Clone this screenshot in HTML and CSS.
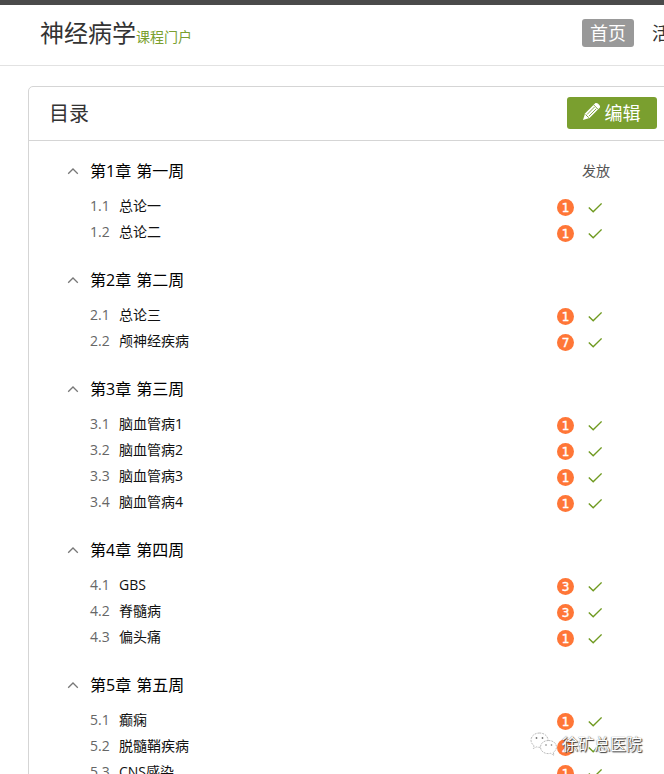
FILE: index.html
```html
<!DOCTYPE html>
<html lang="zh-CN">
<head>
    <meta charset="UTF-8">
    <title>神经病学课程门户</title>
    <link rel="stylesheet" href="styles.css">
</head>
<body>
    <svg class="symbols" width="0" height="0">
        <symbol id="arrow" viewBox="0 0 12 8"><path d="M1.2 6.8L6 2l4.800 4.800" fill="none" stroke="#777" stroke-width="1.3"/></symbol>
        <symbol id="check" viewBox="0 0 14 11"><path d="M.8 5.4L5.200 9.800 13.600 1.400" fill="none" stroke="#6f9a20" stroke-width="1.4"/></symbol>
    </svg>

    <header class="header">
        <h1 class="title">神经病学<small>课程门户</small></h1>
        <nav class="nav">
            <a class="active">首页</a>
            <a>活动</a>
        </nav>
    </header>

    <main class="panel">
        <div class="panel-header">
            <h2>目录</h2>
            <button class="edit-btn">
                <svg width="20" height="20" viewBox="0 0 20 20">
                    <path d="M1 19l2-6.500L13.2 2.3c1.800-1.800 6.300 2.700 4.500 4.500L7.500 17z" fill="#fff"/>
                    <path d="M11.7 3.9l4.500 4.500M5 13.500l7.500-7.500M6.800 15.200l7.500-7.500M3.500 13.500l3.200 3.200" fill="none" stroke="#7a9f2f" stroke-width=".9"/>
                </svg>
                编辑
            </button>
        </div>

        <div class="catalog">
            <section class="chapter">
                <div class="chapter-title">
                    <svg class="arrow"><use href="#arrow"/></svg>
                    <h3>第1章 第一周</h3>
                    <span class="release">发放</span>
                </div>
                <div class="lesson"><span class="num">1.1</span><span class="name">总论一</span><span class="badge">1</span><svg class="check"><use href="#check"/></svg></div>
                <div class="lesson"><span class="num">1.2</span><span class="name">总论二</span><span class="badge">1</span><svg class="check"><use href="#check"/></svg></div>
            </section>

            <section class="chapter">
                <div class="chapter-title">
                    <svg class="arrow"><use href="#arrow"/></svg>
                    <h3>第2章 第二周</h3>
                </div>
                <div class="lesson"><span class="num">2.1</span><span class="name">总论三</span><span class="badge">1</span><svg class="check"><use href="#check"/></svg></div>
                <div class="lesson"><span class="num">2.2</span><span class="name">颅神经疾病</span><span class="badge">7</span><svg class="check"><use href="#check"/></svg></div>
            </section>

            <section class="chapter">
                <div class="chapter-title">
                    <svg class="arrow"><use href="#arrow"/></svg>
                    <h3>第3章 第三周</h3>
                </div>
                <div class="lesson"><span class="num">3.1</span><span class="name">脑血管病1</span><span class="badge">1</span><svg class="check"><use href="#check"/></svg></div>
                <div class="lesson"><span class="num">3.2</span><span class="name">脑血管病2</span><span class="badge">1</span><svg class="check"><use href="#check"/></svg></div>
                <div class="lesson"><span class="num">3.3</span><span class="name">脑血管病3</span><span class="badge">1</span><svg class="check"><use href="#check"/></svg></div>
                <div class="lesson"><span class="num">3.4</span><span class="name">脑血管病4</span><span class="badge">1</span><svg class="check"><use href="#check"/></svg></div>
            </section>

            <section class="chapter">
                <div class="chapter-title">
                    <svg class="arrow"><use href="#arrow"/></svg>
                    <h3>第4章 第四周</h3>
                </div>
                <div class="lesson"><span class="num">4.1</span><span class="name">GBS</span><span class="badge">3</span><svg class="check"><use href="#check"/></svg></div>
                <div class="lesson"><span class="num">4.2</span><span class="name">脊髓病</span><span class="badge">3</span><svg class="check"><use href="#check"/></svg></div>
                <div class="lesson"><span class="num">4.3</span><span class="name">偏头痛</span><span class="badge">1</span><svg class="check"><use href="#check"/></svg></div>
            </section>

            <section class="chapter">
                <div class="chapter-title">
                    <svg class="arrow"><use href="#arrow"/></svg>
                    <h3>第5章 第五周</h3>
                </div>
                <div class="lesson"><span class="num">5.1</span><span class="name">癫痫</span><span class="badge">1</span><svg class="check"><use href="#check"/></svg></div>
                <div class="lesson"><span class="num">5.2</span><span class="name">脱髓鞘疾病</span><span class="badge">2</span><svg class="check"><use href="#check"/></svg></div>
                <div class="lesson"><span class="num">5.3</span><span class="name">CNS感染</span><span class="badge">1</span><svg class="check"><use href="#check"/></svg></div>
            </section>
        </div>
    </main>

    <div class="watermark">
        <svg width="28" height="24" viewBox="0 0 28 24">
            <g fill="#fff" stroke="#aaa" stroke-width=".8" stroke-dasharray="2 1">
                <path d="M9.500 1C4.500 1 1 4.200 1 8.200c0 2.300 1.200 4.200 3 5.500l-.6 2.800 3.100-1.600c5.500 1.600 11.500-1.500 11.500-6.700C18 4.200 14.500 1 9.500 1z"/>
                <path d="M18.500 8.500c-4.700 0-8 2.900-8 6.600 0 4.600 5 7.500 10 6.200l3.500 2-.7-3c2-1.300 3.200-3 3.200-5.200 0-3.700-3.300-6.600-8-6.600z"/>
            </g>
            <g fill="#777">
                <circle cx="6.500" cy="6" r=".9"/>
                <circle cx="12.500" cy="6" r=".9"/>
                <circle cx="16" cy="13" r=".8"/>
                <circle cx="21.500" cy="13" r=".8"/>
            </g>
        </svg>
        <span>徐矿总医院</span>
    </div>
</body>
</html>
```

FILE: styles.css
```css
* {
    margin: 0;
    padding: 0;
    box-sizing: border-box;
}

body {
    height: 774px;
    overflow: hidden;
    position: relative;
    background: #fff;
    border-top: 5px solid #4a4a4a;
    font-family: "Open Sans", "Noto Sans CJK SC", sans-serif;
    color: #333;
}

h1, h2, h3 {
    font-weight: 400;
}

.symbols {
    display: none;
}

.header {
    height: 61px;
    padding: 0 0 4px 40px;
    display: flex;
    align-items: center;
    justify-content: space-between;
    border-bottom: 1px solid #e2e2e2;
    white-space: nowrap;
}

.title {
    padding-top: 3px;
    font-size: 24px;
    line-height: 40px;
}

.title small {
    font-size: 14px;
    font-weight: 400;
    color: #7a9f2f;
}

.nav {
    width: 82px;
    display: flex;
    gap: 10px;
}

.nav a {
    flex: none;
    height: 28px;
    padding: 0 8px;
    border-radius: 3px;
    font-size: 18px;
    line-height: 28px;
}

.nav .active {
    background: #999;
    color: #fff;
}

/* catalog panel runs off the right edge */
.panel {
    width: 700px;
    height: 800px;
    margin: 20px 0 0 28px;
    border: 1px solid #d5d5d5;
    border-radius: 5px;
}

.panel-header {
    height: 54px;
    padding: 0 0 2px 20px;
    display: flex;
    align-items: center;
    border-bottom: 1px solid #d5d5d5;
}

.panel-header h2 {
    width: 518px;
    font-size: 20px;
}

.edit-btn {
    width: 90px;
    height: 32px;
    padding-right: 2px;
    display: flex;
    align-items: center;
    justify-content: center;
    gap: 3px;
    border: none;
    border-radius: 3px;
    background: #7a9f2f;
    color: #fff;
    font-family: inherit;
    font-size: 18px;
    line-height: 32px;
}

.edit-btn svg {
    margin-bottom: 4px;
}

.catalog {
    padding: 13px 0 0 38px;
}

.chapter {
    margin-bottom: 18px;
}

.chapter-title {
    height: 34px;
    margin-bottom: 5px;
    padding-bottom: 2px;
    display: flex;
    align-items: center;
}

.arrow {
    width: 12px;
    height: 8px;
    margin: 2px 11px 0 0;
}

.chapter-title h3 {
    width: 492px;
    font-size: 16px;
    word-spacing: 1px;
    color: #000;
}

.release {
    font-size: 14px;
    color: #555;
}

.lesson {
    height: 26px;
    padding-left: 23px;
    display: flex;
    align-items: center;
    font-size: 14px;
    line-height: 26px;
}

.num {
    width: 29px;
    color: #666;
}

.name {
    width: 438px;
    color: #111;
}

.badge {
    width: 17px;
    height: 17px;
    margin: 3px 14px 0 0;
    border-radius: 50%;
    background: #ff7637;
    color: #fff;
    font: 12px/18px "DejaVu Sans", sans-serif;
    -webkit-text-stroke: 0.4px #fff;
    text-align: center;
}

.check {
    width: 14px;
    height: 11px;
    margin-top: 3px;
}

.watermark {
    position: absolute;
    left: 530px;
    top: 727px;
    display: flex;
    align-items: center;
    gap: 4px;
    font-size: 16px;
    line-height: 24px;
    color: #fff;
    text-shadow: 1px 1px 1px #333, 0 0 1px #555;
}
```
